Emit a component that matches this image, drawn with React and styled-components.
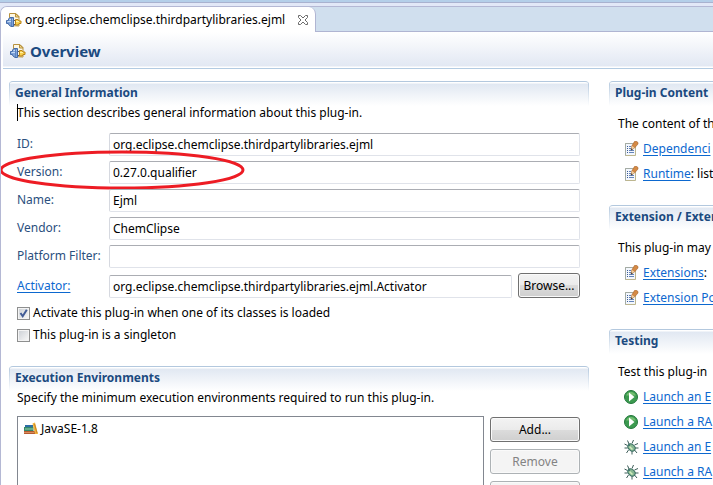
import { createGlobalStyle, styled } from 'styled-components';

const GlobalStyle = createGlobalStyle`
  * {
    box-sizing: border-box;
  }

  body {
    margin: 0;
    overflow: hidden;
    background: #fff;
    color: #000;
    font-family: 'Noto Sans', 'Open Sans', sans-serif;
    font-size: 12px;
    line-height: 18px;
  }

  input,
  button {
    font: inherit;
    color: inherit;
  }
`;

const Window = styled.div`
  display: flex;
  flex-direction: column;
  height: 100vh;
  overflow: hidden;
  border-top: 2px solid #b4cfe9;
`;

const Editor = styled.div`
  flex: 1;
  min-height: 0;
  border-top: 1px solid #a9b2cf;
  padding-top: 3px;
  background: #e2e8f7;
`;

const Part = styled.div`
  height: 100%;
  border: solid #b4b8d4;
  border-width: 1px 0 0 1px;
  border-top-left-radius: 7px;
  background: #fff;
  overflow: hidden;
`;

const TabBar = styled.div`
  display: flex;
  height: 25px;
  background: #d0dfee;
`;

const Tab = styled.div`
  display: flex;
  align-items: center;
  gap: 3px;
  padding: 0 6px 0 5px;
  border-right: 1px solid #b0b5d2;
  border-top-right-radius: 7px;
  background: #fff;
  white-space: nowrap;
`;

const TabClose = styled.button`
  display: flex;
  margin-left: 9px;
  padding: 0;
  border: 0;
  background: none;
`;

const TabFill = styled.div`
  flex: 1;
  border-bottom: 1px solid #b0b5d2;
`;

const FormHeader = styled.header`
  display: flex;
  align-items: center;
  gap: 4px;
  height: 37px;
  margin-left: 2px;
  padding: 2px 7px 0;
  border-bottom: 1px solid #b3cbe2;
  background: linear-gradient(#fff, #e2e8f3 34px, #fff 35px);
`;

const Title = styled.h1`
  margin: 0;
  color: #1b4a80;
  font-size: 15px;
  font-weight: 700;
`;

const Columns = styled.main`
  display: grid;
  grid-template-columns: minmax(0, 1fr) 104px;
  gap: 20px;
  padding: 12px 0 0 8px;
`;

const Column = styled.div`
  display: flex;
  flex-direction: column;
  white-space: nowrap;
`;

const SideColumn = styled(Column)`
  gap: 19px;
`;

const Section = styled.section`
  padding: 0 ${(p) => (p.$open ? 0 : 9)}px 0 8px;
  border-top: 1px solid #b3c8de;
  border-top-left-radius: 4px;
  border-top-right-radius: ${(p) => (p.$open ? 0 : 4)}px;
  background:
    linear-gradient(#b3c8de, #fff) left top / 1px 24px no-repeat,
    linear-gradient(#b3c8de, #fff) right top / ${(p) => (p.$open ? 0 : 1)}px 24px no-repeat,
    linear-gradient(#fff 1px, #e1e8f2 2px, #fff) left top / 100% 24px no-repeat;
`;

const SectionTitle = styled.h2`
  margin: 0 0 0 -2px;
  padding: 2px 0;
  color: #1b4a80;
  font-size: 12px;
  font-weight: 700;
  line-height: 18px;
`;

const Description = styled.p`
  height: 18px;
  margin: 0;
  padding-left: ${(p) => (p.$indent ? 1 : 0)}px;
`;

const Caret = styled.span`
  display: inline-block;
  width: 1px;
  height: 17px;
  margin-right: -1px;
  background: #000;
  vertical-align: top;
`;

const Fields = styled.div`
  display: flex;
  flex-direction: column;
  gap: 6px;
  margin-top: 11px;
`;

const FieldRow = styled.div`
  position: relative;
  display: grid;
  grid-template-columns: 92px minmax(0, 1fr) ${(p) => (p.$action ? '62px' : '')};
  align-items: center;
`;

const Label = styled.label`
  color: #2b4f7e;
`;

const Link = styled.a`
  color: #0c68cf;
  text-decoration: underline;
  text-underline-offset: 2px;
`;

const TextInput = styled.input`
  width: 100%;
  height: 23px;
  margin-bottom: -1px;
  padding: 0 3px;
  border: 1px solid #e0e3ea;
  border-top-color: #abadb3;
  border-left-color: #d6d9e0;
  border-radius: 2px;
  background: #fff;
  outline: 0;
`;

const InputCell = styled.div`
  display: flex;
  padding-right: 6px;
`;

const Button = styled.button`
  height: 25px;
  padding: 0;
  border: 1px solid #707070;
  border-radius: 3px;
  background: linear-gradient(#f3f3f3, #ebebeb 50%, #dcdcdc 50%, #cfcfcf);
  box-shadow: inset 0 0 0 1px #fafafa;

  &:disabled {
    border-color: #adb2b5;
    background: #f4f4f4;
    color: #838383;
  }
`;

const Highlight = styled.svg`
  position: absolute;
  left: -17px;
  top: -11px;
  width: 246px;
  height: 41px;
  pointer-events: none;
`;

const Checks = styled.div`
  display: flex;
  flex-direction: column;
  margin: 4px 0 20px;
`;

const CheckLabel = styled.label`
  display: flex;
  align-items: center;
  gap: 3px;
  height: 22px;
`;

const Checkbox = styled.input`
  appearance: none;
  width: 13px;
  height: 13px;
  margin: 0;
  border: 1px solid #8e8f8f;
  background: linear-gradient(135deg, #cfd3d8, #f6f6f6) center / 9px 9px no-repeat #f4f4f4;

  &:checked {
    background:
      url("data:image/svg+xml,%3Csvg xmlns='http://www.w3.org/2000/svg' viewBox='0 0 11 11'%3E%3Cpath d='M2.5 5l2.2 3.2L8.8 1.8' fill='none' stroke='%23425c96' stroke-width='2'/%3E%3C/svg%3E") center / 11px 11px no-repeat,
      linear-gradient(135deg, #cfd3d8, #f6f6f6) center / 9px 9px no-repeat #f4f4f4;
  }
`;

const Environments = styled.div`
  display: grid;
  grid-template-columns: minmax(0, 1fr) 90px;
  gap: 6px;
  margin-top: 9px;
`;

const EnvList = styled.ul`
  height: 160px;
  margin: 0;
  padding: 3px 5px;
  border: 1px solid #828790;
  list-style: none;
`;

const EnvItem = styled.li`
  display: flex;
  align-items: center;
  gap: 2px;
  height: 18px;
`;

const ButtonStack = styled.div`
  display: flex;
  flex-direction: column;
  gap: 7px;
  padding-top: 1px;
`;

const LinkBody = styled.div`
  padding-top: 11px;
`;

const LinkList = styled.ul`
  margin: 3px 0 0;
  padding: 0 0 0 7px;
  list-style: none;
`;

const LinkItem = styled.li`
  display: flex;
  align-items: center;
  height: 25px;

  svg {
    flex: none;
    margin-right: 4px;
  }
`;

const PluginIcon = () => (
  <svg width="16" height="16" viewBox="0 0 16 16" aria-hidden="true">
    <path d="M3.500 13.500V1.500h6.500l3 3v9.500z" fill="#fdf8e6" stroke="#b8923f" />
    <path d="M9.500 1.500v3.500h3.500z" fill="#eed58b" stroke="#b8923f" />
    <path d="M.5 8.500h2v-1.500l1.500-1.500h3.500v9H5l-2.500-2v-1h-2z" fill="#7fa3d8" stroke="#456caa" />
    <path d="M3.500 7.500h3M1.500 9.500h4" stroke="#c6daf5" />
    <path d="M5.500 6v8" stroke="#5c83c0" />
    <path d="M8 8.500h1.500M8 12.500h1.500" stroke="#555" />
    <path d="M9.500 7.500h2.500l1 1.500h2v2.500h-2l-1 1.500H9.500z" fill="#f8d04d" stroke="#b98318" />
    <path d="M10 9.500h3" stroke="#fff1a8" />
  </svg>
);

const CloseIcon = () => (
  <svg width="12" height="12" viewBox="0 0 12 12" aria-hidden="true">
    <path
      d="M1.500 1.500h2L6 4l2.500-2.500h2v2L8 6l2.500 2.500v2h-2L6 8l-2.500 2.500h-2v-2L4 6 1.500 3.500z"
      fill="#fff"
      stroke="#6c6c6c"
    />
  </svg>
);

const BooksIcon = () => (
  <svg width="16" height="16" viewBox="0 0 16 16" aria-hidden="true">
    <path d="M2 4h8v2H2z" fill="#2d6da5" />
    <path d="M1 6h9.500v4H1z" fill="#33886a" />
    <path d="M2 8h8" stroke="#9bd0a6" />
    <path d="M1 10h11v3H1z" fill="#b65b32" />
    <path d="M1 11.500h10" stroke="#d98d5b" />
    <path d="M9.500 2.500l2.500-1L15 13h-3z" fill="#efb23c" />
    <path d="M11.500 3l2.500 9" stroke="#ca8425" />
  </svg>
);

const EditIcon = () => (
  <svg width="15" height="16" viewBox="0 0 15 16" aria-hidden="true">
    <path d="M1.500 2.500h10v12h-10z" fill="#f3f7fd" stroke="#bdb68f" />
    <path d="M1.500 14.500V2.500h7" fill="none" stroke="#a3aba5" />
    <path d="M3 5.500h1M3 7.500h1M3 9.500h1M3 11.500h1" stroke="#3a5a94" />
    <path d="M5 5.500h2M5 7.500h2M5 9.500h5M5 11.500h5" stroke="#6484ba" />
    <path d="M7 9l.8-4L10.500.5 12 0l2 1.500v1.500L10.500 7z" fill="#d48a45" stroke="#a5622d" strokeWidth=".6" />
    <path d="M8 5l2.500 1.800L7 9z" fill="#f0d3a8" />
    <path d="M7 9.500l.3-2.300 1.500 1z" fill="#333" />
  </svg>
);

const RunIcon = () => (
  <svg width="15" height="16" viewBox="0 0 15 16" aria-hidden="true">
    <circle cx="7" cy="8" r="6.500" fill="#3c9a50" stroke="#23783b" />
    <path d="M2.200 6.500a5 5 0 0 1 9.600 0z" fill="#72bd70" />
    <path d="M5 3.500v9L10.500 8z" fill="#fff" />
  </svg>
);

const DebugIcon = () => (
  <svg width="15" height="16" viewBox="0 0 15 16" aria-hidden="true">
    <path
      d="M5 5L3.500 1.500M8 4.500L9.500 1M3.500 6.500L.5 5M10.500 6L14 4.500M3.500 9H.5M11 9h3.500M4.500 11l-2 3M8 12v3.500M10.500 11l2.500 3"
      fill="none"
      stroke="#3d5c58"
    />
    <ellipse cx="7.500" cy="8.500" rx="4" ry="3" transform="rotate(40 7.500 8.500)" fill="#87b791" stroke="#376d62" />
    <path d="M5.500 7.500l3 3" stroke="#d3edbd" strokeWidth="1.500" />
    <circle cx="5" cy="6" r="1.200" fill="#467b70" />
  </svg>
);

const fields = [
  { id: 'plugin-id', label: 'ID:', value: 'org.eclipse.chemclipse.thirdpartylibraries.ejml' },
  { id: 'version', label: 'Version:', value: '0.27.0.qualifier', marked: true },
  { id: 'name', label: 'Name:', value: 'Ejml' },
  { id: 'vendor', label: 'Vendor:', value: 'ChemClipse' },
  { id: 'filter', label: 'Platform Filter:', value: '' },
];

const sidebar = [
  {
    title: 'Plug-in Content',
    text: 'The content of th',
    links: [
      { icon: EditIcon, label: 'Dependenci', rest: '' },
      { icon: EditIcon, label: 'Runtime', rest: ': list' },
    ],
  },
  {
    title: 'Extension / Exten',
    text: 'This plug-in may',
    links: [
      { icon: EditIcon, label: 'Extensions', rest: ':' },
      { icon: EditIcon, label: 'Extension Po', rest: '' },
    ],
  },
  {
    title: 'Testing',
    text: 'Test this plug-in',
    links: [
      { icon: RunIcon, label: 'Launch an E', rest: '' },
      { icon: RunIcon, label: 'Launch a RA', rest: '' },
      { icon: DebugIcon, label: 'Launch an E', rest: '' },
      { icon: DebugIcon, label: 'Launch a RA', rest: '' },
    ],
  },
];

const GeneralInformation = () => (
  <Section>
    <SectionTitle>General Information</SectionTitle>
    <Description>
      <Caret />
      This section describes general information about this plug-in.
    </Description>
    <Fields>
      {fields.map((field) => (
        <FieldRow key={field.id}>
          <Label htmlFor={field.id}>{field.label}</Label>
          <TextInput id={field.id} defaultValue={field.value} />
          {field.marked && (
            <Highlight viewBox="0 0 246 41" aria-hidden="true">
              <ellipse cx="122" cy="20" rx="121" ry="18" fill="none" stroke="#ed1c24" strokeWidth="3" />
            </Highlight>
          )}
        </FieldRow>
      ))}
      <FieldRow $action>
        <Link href="#activator" id="activator-label">
          Activator:
        </Link>
        <InputCell>
          <TextInput
            aria-labelledby="activator-label"
            defaultValue="org.eclipse.chemclipse.thirdpartylibraries.ejml.Activator"
          />
        </InputCell>
        <Button type="button">Browse...</Button>
      </FieldRow>
    </Fields>
    <Checks>
      <CheckLabel>
        <Checkbox type="checkbox" defaultChecked />
        Activate this plug-in when one of its classes is loaded
      </CheckLabel>
      <CheckLabel>
        <Checkbox type="checkbox" />
        This plug-in is a singleton
      </CheckLabel>
    </Checks>
  </Section>
);

const ExecutionEnvironments = () => (
  <Section>
    <SectionTitle>Execution Environments</SectionTitle>
    <Description>Specify the minimum execution environments required to run this plug-in.</Description>
    <Environments>
      <EnvList>
        <EnvItem>
          <BooksIcon />
          JavaSE-1.8
        </EnvItem>
      </EnvList>
      <ButtonStack>
        <Button type="button">Add...</Button>
        <Button type="button" disabled>
          Remove
        </Button>
        <Button type="button" aria-label="Up" disabled />
      </ButtonStack>
    </Environments>
  </Section>
);

const App = () => {
  return (
    <Window>
      <GlobalStyle />
      <Editor>
        <Part>
          <TabBar>
            <Tab>
              <PluginIcon />
              org.eclipse.chemclipse.thirdpartylibraries.ejml
              <TabClose type="button" aria-label="Close">
                <CloseIcon />
              </TabClose>
            </Tab>
            <TabFill />
          </TabBar>
          <FormHeader>
            <PluginIcon />
            <Title>Overview</Title>
          </FormHeader>
          <Columns>
            <Column>
              <GeneralInformation />
              <ExecutionEnvironments />
            </Column>
            <SideColumn>
              {sidebar.map((group) => (
                <Section key={group.title} $open>
                  <SectionTitle>{group.title}</SectionTitle>
                  <LinkBody>
                    <Description $indent>{group.text}</Description>
                    <LinkList>
                      {group.links.map(({ icon: Icon, label, rest }, i) => (
                        <LinkItem key={i}>
                          <Icon />
                          <Link href="#details">{label}</Link>
                          {rest}
                        </LinkItem>
                      ))}
                    </LinkList>
                  </LinkBody>
                </Section>
              ))}
            </SideColumn>
          </Columns>
        </Part>
      </Editor>
    </Window>
  );
};

export default App;
